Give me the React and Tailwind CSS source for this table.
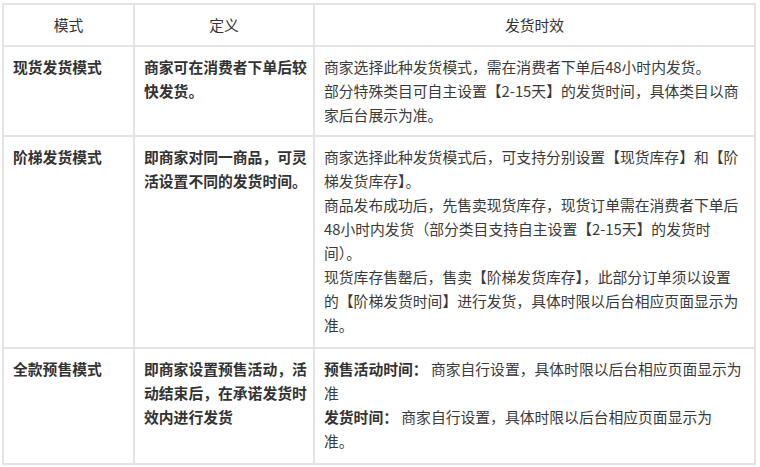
import React from "react";

const font = { fontFamily: '"Noto Sans CJK SC", "Noto Sans", sans-serif' };

const cell = "border-2 border-[#e4e4e4] align-top pl-[9px] pr-[6px] pt-[8px] pb-0";

export default function App() {
  return (
    <div className="w-[760px] h-[467px] bg-white pt-[3px] pl-[2px] text-[#333]" style={font}>
      <table className="border-collapse table-fixed w-[752px] text-[14.8px] leading-[24px]">
        <colgroup>
          <col className="w-[131px]" />
          <col className="w-[180px]" />
          <col className="w-[441px]" />
        </colgroup>
        <thead>
          <tr className="h-[42px]">
            <th className="border-2 border-[#e4e4e4] font-normal text-center align-middle">模式</th>
            <th className="border-2 border-[#e4e4e4] font-normal text-center align-middle">定义</th>
            <th className="border-2 border-[#e4e4e4] font-normal text-center align-middle">发货时效</th>
          </tr>
        </thead>
        <tbody>
          <tr className="h-[90px]">
            <td className={cell + " font-bold"}>现货发货模式</td>
            <td className={cell + " font-bold whitespace-nowrap"}>
              商家可在消费者下单后较<br />快发货。
            </td>
            <td className={cell + " whitespace-nowrap text-[#3a3a3a]"}>
              商家选择此种发货模式，需在消费者下单后48小时内发货。<br />
              部分特殊类目可自主设置【2-15天】的发货时间，具体类目以商<br />
              家后台展示为准。
            </td>
          </tr>
          <tr className="h-[212px]">
            <td className={cell + " font-bold"}>阶梯发货模式</td>
            <td className={cell + " font-bold whitespace-nowrap"}>
              即商家对同一商品，可灵<br />活设置不同的发货时间。
            </td>
            <td className={cell + " whitespace-nowrap text-[#3a3a3a]"}>
              商家选择此种发货模式后，可支持分别设置【现货库存】和【阶<br />
              梯发货库存】。<br />
              商品发布成功后，先售卖现货库存，现货订单需在消费者下单后<br />
              48小时内发货（部分类目支持自主设置【2-15天】的发货时<br />
              间）。<br />
              现货库存售罄后，售卖【阶梯发货库存】，此部分订单须以设置<br />
              的【阶梯发货时间】进行发货，具体时限以后台相应页面显示为<br />
              准。
            </td>
          </tr>
          <tr className="h-[116px]">
            <td className={cell + " font-bold"}>全款预售模式</td>
            <td className={cell + " font-bold whitespace-nowrap"}>
              即商家设置预售活动，活<br />动结束后，在承诺发货时<br />效内进行发货
            </td>
            <td className={cell + " whitespace-nowrap text-[#3a3a3a]"}>
              <span className="font-bold text-[#333]">预售活动时间：</span> 商家自行设置，具体时限以后台相应页面显示为<br />
              准<br />
              <span className="font-bold text-[#333]">发货时间：</span> 商家自行设置，具体时限以后台相应页面显示为<br />
              准。
            </td>
          </tr>
        </tbody>
      </table>
    </div>
  );
}
